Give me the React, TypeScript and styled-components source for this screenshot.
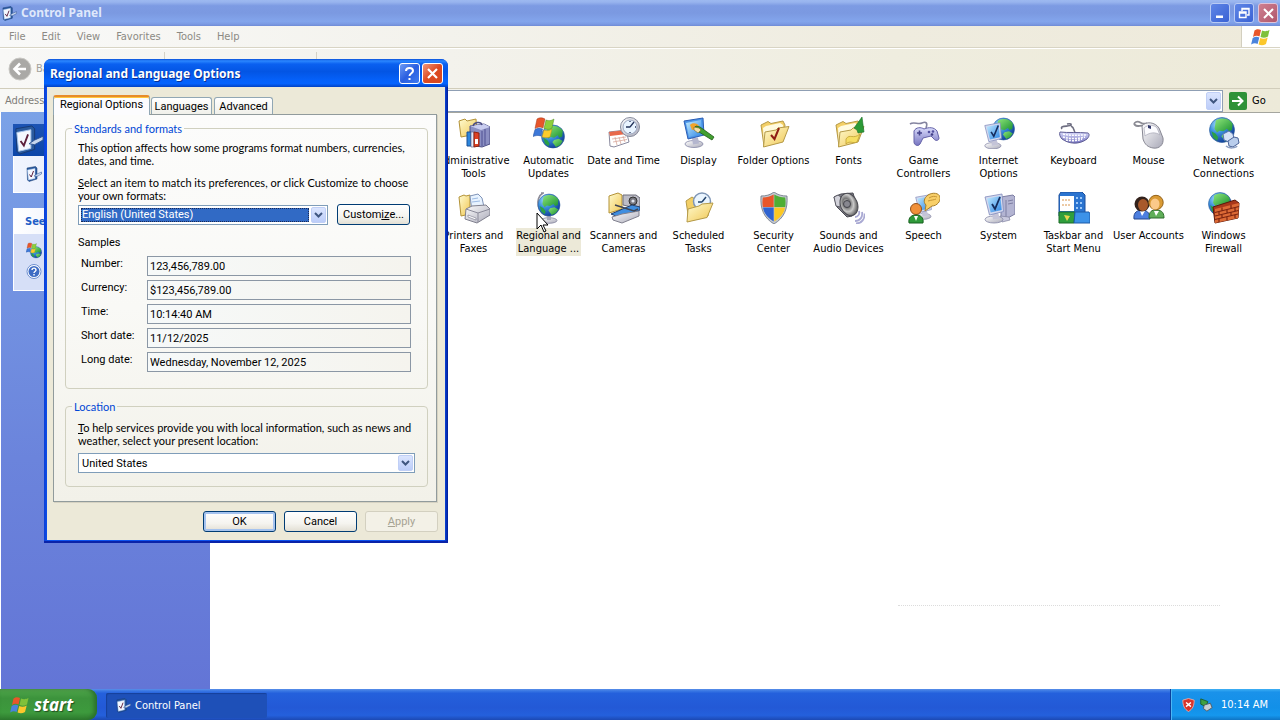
import React from "react";
import styled, { createGlobalStyle, css } from "styled-components";

const tahoma = `"DejaVu Sans Condensed", "Open Sans", sans-serif`;
const sans = `Roboto, "Liberation Sans", Arial, sans-serif`;
const prose = `Lato, "Liberation Sans", Arial, sans-serif`;
const caption = `"Noto Sans", "Open Sans", sans-serif`;

const GlobalStyle = createGlobalStyle`
  *, *::before, *::after { box-sizing: border-box; }
  body { margin: 0; font-family: ${tahoma}; font-size: 11px; line-height: 13px; color: #000; cursor: default; }
  button, select, input { font: inherit; color: inherit; margin: 0; }
  button { padding: 0; border: 0; background: none; }
  svg { display: block; flex: none; }
`;

/* ---------- window shell ---------- */

const Desktop = styled.div`
  position: relative;
  display: flex;
  flex-direction: column;
  min-height: 100vh;
  overflow: hidden;
  background: #fff;
`;

const TitleBar = styled.header`
  display: flex;
  align-items: center;
  gap: 4px;
  height: 26px;
  padding: 0 2px;
  background: linear-gradient(#9db9f0 0, #98b4ee 8%, #7d9be3 22%, #7b99e1 50%, #83a5ec 82%, #7c9be4 92%, #6f8bd6 100%);
`;

const WindowTitle = styled.h1`
  flex: 1;
  margin: 0;
  font: bold 12px/18px ${caption};
  color: #dfe8fb;
`;

const CaptionButton = styled.button<{ $tone: "soft" | "softRed" | "blue" | "red" }>`
  display: flex;
  align-items: center;
  justify-content: center;
  width: 21px;
  height: 21px;
  border: 1px solid #fff;
  border-radius: 3px;
  ${({ $tone }) => $tone === "soft" && css`background: linear-gradient(135deg, #5f86e6, #3a62d4); border-color: #b9cbf4; width: 20px; height: 20px;`}
  ${({ $tone }) => $tone === "softRed" && css`background: linear-gradient(135deg, #cf8090, #b0566c); border-color: #dfc3d8; width: 20px; height: 20px;`}
  ${({ $tone }) => $tone === "blue" && css`background: linear-gradient(135deg, #6d9bf5, #2a5fe0 50%, #3f7bf0);`}
  ${({ $tone }) => $tone === "red" && css`background: linear-gradient(135deg, #f0977c, #dc4a22 50%, #d8491f);`}
`;

const MenuBar = styled.nav`
  display: flex;
  align-items: center;
  height: 22px;
  padding-left: 1px;
  background: linear-gradient(90deg, #f9f9f8, #f3f2ec 35%, #efecdf 70%, #eeeadb);
  border-bottom: 1px solid #d8d4c4;
`;

const MenuItem = styled.button`
  padding: 0 8px;
  line-height: 18px;
  color: #8c8a84;
  &:last-of-type { margin-right: auto; }
`;

const FlagBox = styled.div`
  display: flex;
  align-items: center;
  justify-content: center;
  align-self: stretch;
  width: 39px;
  background: #fff;
  border-left: 1px solid #d3cfbf;
`;

const ToolBar = styled.div`
  display: flex;
  align-items: center;
  height: 41px;
  padding-left: 8px;
  background: linear-gradient(90deg, #f8f8f6, #f3f2ec 35%, #efeddf 70%, #edead9);
  border-top: 1px solid #fff;
  border-bottom: 1px solid #d1cdbb;
`;

const ToolButton = styled.button`
  display: flex;
  align-items: center;
  gap: 4px;
  color: #a3a19b;
`;

const ToolDivider = styled.span<{ $space: number }>`
  width: 1px;
  height: 34px;
  margin-left: ${({ $space }) => $space}px;
  background: #d5d2c6;
`;

const AddressBar = styled.div`
  display: flex;
  align-items: center;
  gap: 3px;
  height: 23px;
  padding: 0 0 0 5px;
  background: linear-gradient(90deg, #f8f8f5, #f1efe6 50%, #edead9);
`;

const AddressLabel = styled.label`
  color: #7f7d78;
`;

const AddressField = styled.div`
  display: flex;
  flex: 1;
  height: 22px;
  padding: 1px;
  background: #fff;
  border: 1px solid #8f9fb4;
`;

const AddressInput = styled.input`
  flex: 1;
  min-width: 0;
  padding: 0 4px;
  border: 0;
  background: none;
  outline: 0;
`;

const DropArrow = styled.button`
  display: flex;
  align-items: center;
  justify-content: center;
  flex: none;
  width: 15px;
  border-radius: 2px;
  background: linear-gradient(#dbe5fe, #bccdf9);
  border: 1px solid #c0cff6;
`;

const GoButton = styled.button`
  display: flex;
  align-items: center;
  gap: 5px;
  width: 54px;
  padding-left: 3px;
`;

const Workspace = styled.div`
  display: flex;
  flex: 1;
  padding-left: 1px;
`;

/* ---------- task side bar ---------- */

const SideBar = styled.aside`
  width: 209px;
  padding: 12px;
  background: linear-gradient(#7ba2e7, #6b84dc 60%, #6375d6);
`;

const TaskGroup = styled.section`
  margin-bottom: 15px;
`;

const TaskTitle = styled.h2<{ $dark?: boolean }>`
  display: flex;
  align-items: center;
  gap: 8px;
  height: ${({ $dark }) => ($dark ? 32 : 26)}px;
  margin: 0;
  padding-left: ${({ $dark }) => ($dark ? 1 : 12)}px;
  font: bold 11px/13px ${tahoma};
  color: #215dc6;
  background: ${({ $dark }) => ($dark ? "linear-gradient(#1d54b4, #0b45a8)" : "linear-gradient(90deg, #fff, #c6d3f7)")};
`;

const TaskList = styled.div<{ $tall?: boolean }>`
  display: flex;
  flex-direction: column;
  gap: 4px;
  padding: ${({ $tall }) => ($tall ? "8px 12px 10px" : "10px 12px")};
  background: linear-gradient(90deg, ${({ $tall }) => ($tall ? "#d6dff7" : "#f0f4fe")}, #d6dff7);
  border: 1px solid #fff;
  border-top: 0;
`;

/* ---------- icon view ---------- */

const IconPane = styled.main`
  position: relative;
  flex: 1;
  padding: 4px 0 0 1px;
  background: #fff;
  border-top: 1px solid #a5a69f;
`;

const IconGrid = styled.div`
  display: grid;
  grid-template-columns: repeat(auto-fill, 75px);
  grid-auto-rows: 75px;
`;

const IconItem = styled.button<{ $column?: number }>`
  display: flex;
  flex-direction: column;
  align-items: center;
  gap: 4px;
  ${({ $column }) => $column && css`grid-column-start: ${$column};`}
`;

const IconLabel = styled.span<{ $active?: boolean }>`
  padding: 1px 0;
  text-align: center;
  white-space: pre;
  background: ${({ $active }) => ($active ? "#ece9d8" : "transparent")};
`;

const BalloonEdge = styled.div`
  position: absolute;
  right: 60px;
  bottom: 83px;
  width: 322px;
  border-top: 1px dotted #dcdcdc;
`;

const Pointer = styled.div`
  position: absolute;
  left: 536px;
  top: 212px;
`;

/* ---------- dialog ---------- */

const Dialog = styled.section`
  position: absolute;
  left: 44px;
  top: 59px;
  width: 404px;
  padding: 0 3px 3px;
  font-family: ${sans};
  background: linear-gradient(90deg, #0a3fd6, #0d52ee 1%, #0d52ee 99%, #001b96);
  border-radius: 7px 7px 0 0;
  box-shadow: inset 0 -2px 0 #0a23a8;
`;

const DialogTitleBar = styled.header`
  display: flex;
  align-items: center;
  gap: 2px;
  height: 28px;
  margin: 0 -3px;
  padding: 1px 5px 0 6px;
  border-radius: 7px 7px 0 0;
  background: linear-gradient(#0a50d8 0, #2b87ff 7%, #0a60f0 18%, #0355e4 45%, #0562fb 78%, #0563fd 88%, #0242c4 100%);
`;

const DialogTitle = styled.h2`
  flex: 1;
  margin: 0;
  padding-top: 1px;
  font: bold 12px/18px ${caption};
  color: #fff;
  text-shadow: 1px 1px 0 #0a3093;
`;

const DialogBody = styled.div`
  padding: 8px 8px 8px 6px;
  background: #ece9d8;
`;

const TabStrip = styled.div`
  display: flex;
  align-items: flex-end;
  gap: 2px;
  height: 19px;
`;

const Tab = styled.button<{ $active?: boolean; $width: number }>`
  width: ${({ $width }) => $width}px;
  height: 17px;
  border: 1px solid #91a7b4;
  border-bottom: 0;
  border-radius: 3px 3px 0 0;
  background: linear-gradient(#fff, #f0f0ea);
  white-space: nowrap;
  ${({ $active }) => $active && css`
    height: 20px;
    margin: 0 -1px -1px 0;
    padding-bottom: 3px;
    border-top: 2px solid #e68b2c;
    background: #fcfcfe;
    box-shadow: inset 0 1px 0 #ffc73c;
    position: relative;
  `}
`;

const TabPanel = styled.div`
  display: flex;
  flex-direction: column;
  gap: 11px;
  padding: 7px 8px 14px 11px;
  background: linear-gradient(#fcfcfb, #f9f9f6 50%, #f2f1e9);
  border: 1px solid #919b9c;
  box-shadow: 1px 1px 0 #d6d2c2;
`;

const Group = styled.fieldset<{ $top: number; $bottom: number }>`
  min-width: 0;
  margin: 0;
  padding: ${({ $top }) => $top}px 12px ${({ $bottom }) => $bottom}px;
  border: 1px solid #d0d0bf;
  border-radius: 4px;
`;

const GroupTitle = styled.legend`
  margin-left: -6px;
  padding: 0 2px;
  font-family: ${prose};
  color: #0046d5;
`;

const Hint = styled.p`
  margin: 0 -10px 9px 0;
  font-family: ${prose};
`;

const PickHint = styled.label<{ $gap: number }>`
  display: block;
  margin: 0 -10px ${({ $gap }) => $gap}px 0;
  font-family: ${prose};
`;

const PickRow = styled.div`
  display: flex;
  align-items: center;
  gap: 9px;
  margin-right: 5px;
`;

const SelectFrame = styled.div`
  display: flex;
  flex: 1;
  height: 20px;
  padding: 1px;
  background: #fff;
  border: 1px solid #7f9db9;
`;

const Select = styled.select<{ $focused?: boolean }>`
  flex: 1;
  min-width: 0;
  margin: 1px;
  margin-right: 2px;
  padding: 0 1px;
  border: 0;
  border-radius: 0;
  appearance: none;
  outline: 0;
  background: #fff;
  ${({ $focused }) => $focused && css`
    color: #fff;
    background: #316ac5;
    outline: 1px dotted #1a2a55;
    outline-offset: -1px;
  `}
`;

const PushButton = styled.button<{ $default?: boolean }>`
  width: 73px;
  height: 21px;
  border: 1px solid #003c74;
  border-radius: 3px;
  background: linear-gradient(#fff, #f5f4ef 60%, #e2dfd4);
  ${({ $default }) => $default && css`box-shadow: inset 0 0 0 2px #a5c3ef;`}
  &:disabled { color: #a6a393; border-color: #d3d0c0; background: #f3f1e7; }
`;

const SampleTitle = styled.p`
  margin: 11px 0 7px;
`;

const Samples = styled.div`
  display: grid;
  grid-template-columns: 66px 1fr;
  row-gap: 4px;
  margin: 0 4px 0 3px;
`;

const SampleLabel = styled.label`
  padding-top: 1px;
`;

const SampleField = styled.input`
  width: 100%;
  height: 20px;
  padding: 0 2px;
  border: 1px solid #8b97a5;
  background: linear-gradient(90deg, #f6f9f9, #f5f4ee);
  outline: 0;
`;

const ButtonRow = styled.footer`
  display: flex;
  justify-content: flex-end;
  gap: 8px;
  margin: 9px -1px 0 0;
`;

/* ---------- task bar ---------- */

const TaskBar = styled.footer`
  display: flex;
  align-items: stretch;
  height: 31px;
  background: linear-gradient(#5a8fe8 0, #3a78e4 6%, #2460dc 14%, #2359d6 60%, #2460dc 85%, #1c49b4 100%);
`;

const StartButton = styled.button`
  display: flex;
  align-items: center;
  gap: 4px;
  width: 97px;
  padding-left: 10px;
  border-radius: 0 9px 9px 0;
  background: linear-gradient(#5eac56 0, #49a046 10%, #3c933c 30%, #3d9a3d 75%, #2f7d2f 100%);
  box-shadow: inset -3px 0 4px #2a6f2c;
  font: italic bold 17px/22px ${caption};
  color: #fff;
  text-shadow: 1px 1px 1px #1f4f1f;
`;

const TaskButton = styled.button`
  display: flex;
  align-items: center;
  gap: 4px;
  width: 161px;
  margin: 4px auto 2px 9px;
  padding-left: 10px;
  color: #fff;
  border-radius: 2px;
  background: #1e50b8;
  box-shadow: inset 1px 1px 1px #16409a;
`;

const Tray = styled.div`
  display: flex;
  align-items: center;
  gap: 4px;
  width: 110px;
  padding-left: 11px;
  color: #fff;
  border-left: 1px solid #0a3f9c;
  box-shadow: inset 1px 0 0 #4db6f4;
  background: linear-gradient(#3fb0f4 0, #1a92ea 10%, #1290e8 60%, #1597ee 85%, #0f74c4 100%);
`;

const Clock = styled.time`
  margin-left: 4px;
  white-space: nowrap;
`;

/* ---------- drawings ---------- */

const PaintSheet = styled.svg`
  position: absolute;
`;

const Paints = () => (
  <PaintSheet width="0" height="0" aria-hidden="true">
    <defs>
      <radialGradient id="sea" cx=".32" cy=".28" r=".75">
        <stop offset="0" stopColor="#a6dcfc" /><stop offset=".45" stopColor="#3a8fdc" /><stop offset="1" stopColor="#123f9a" />
      </radialGradient>
      <linearGradient id="land" x1="0" y1="0" x2="1" y2="1">
        <stop offset="0" stopColor="#8fe67a" /><stop offset="1" stopColor="#178f30" />
      </linearGradient>
      <linearGradient id="folder" x1="0" y1="0" x2="1" y2="1">
        <stop offset="0" stopColor="#fffbd0" /><stop offset="1" stopColor="#f0c652" />
      </linearGradient>
      <linearGradient id="steel" x1="0" y1="0" x2="1" y2="1">
        <stop offset="0" stopColor="#fff" /><stop offset="1" stopColor="#a9a9b8" />
      </linearGradient>
      <linearGradient id="screen" x1="0" y1="0" x2="1" y2="1">
        <stop offset="0" stopColor="#c3ecff" /><stop offset="1" stopColor="#2f86e4" />
      </linearGradient>
      <linearGradient id="lilac" x1="0" y1="0" x2="0" y2="1">
        <stop offset="0" stopColor="#d9dbfb" /><stop offset="1" stopColor="#7674c0" />
      </linearGradient>
      <radialGradient id="cone" cx=".4" cy=".4" r=".6">
        <stop offset="0" stopColor="#eee" /><stop offset=".35" stopColor="#777" /><stop offset=".65" stopColor="#c9c9c9" /><stop offset="1" stopColor="#666" />
      </radialGradient>
    </defs>
  </PaintSheet>
);

const Globe = ({ x, y, r }: { x: number; y: number; r: number }) => (
  <g transform={`translate(${x} ${y}) scale(${r / 10})`}>
    <circle r="10" fill="url(#sea)" stroke="#2a5a9a" strokeWidth=".5" />
    <path d="M-5-7.600C0-10.500 6-9 8.500-5L8 0 5.500 1 4-1 1 1-2 .5-4 2-6-1-5.500-4Z" fill="url(#land)" />
    <path d="M1 3 5 2 8.500 4 6 7.500 2.500 9.200 1 7-.5 5Z" fill="url(#land)" />
    <path d="M-8.500 1-5 3-3 6-4 8.500-7 6Z" fill="#2ba045" />
  </g>
);

const Folder = () => (
  <g>
    <path d="M3 8 10 4.500l3 2L25 4l2 4-2 16L6 29Z" fill="#f3cf66" stroke="#b59a48" />
    <path d="M5 11 8 9l14-3 3 2-1 14L6 27Z" fill="#fffbe0" />
    <path d="M7 15 18 13l2-2 11-1.500-6 15.500L5.500 30Z" fill="url(#folder)" stroke="#b59a48" />
  </g>
);

const Monitor = ({ tick }: { tick?: boolean }) => (
  <g>
    <ellipse cx="11" cy="27.500" rx="9" ry="3.500" fill="url(#steel)" stroke="#8486a6" strokeWidth=".8" />
    <path d="m9 21 6-.5 2 6-7 1Z" fill="#c4c4d8" />
    <path d="m2 5 17-3 1.500 17.500-14 3.500Z" fill="#d5d9ee" stroke="#7f8abb" strokeWidth=".8" />
    <path d="m4 6.500 13.500-2.500 1.200 14-11 2.500Z" fill="url(#screen)" />
    {tick && <path d="m9 12 3 5L17 5" fill="none" stroke="#152c5c" strokeWidth="1.800" />}
  </g>
);

const Flag = ({ size }: { size: number }) => (
  <svg width={size} height={size} viewBox="0 0 20 20" aria-hidden="true">
    <path d="M3.500 3.500C6 1.500 8 2 10 3L8.500 9.500C6.500 8.500 4.500 8.500 2 10Z" fill="#e8562a" />
    <path d="M11 3.500c2.500 1 4.500 1 7.500-.5L17 9.500c-2.500 1.500-5 1.500-7.500.5Z" fill="#7fc13a" />
    <path d="M1.700 11c2.500-1.500 4.500-1.500 6.600-.5L6.600 17c-2-1-4-1-6.500.5Z" fill="#4a83dc" />
    <path d="M9.200 11c2.500 1 4.800 1 7.500-.5L15 17c-2.500 1.500-5 1.500-7.400.5Z" fill="#fbc72c" />
  </svg>
);

const PanelIcon = ({ size }: { size: number }) => (
  <svg width={size} height={size} viewBox="0 0 32 32" aria-hidden="true">
    <path d="m2 4 17-3 3 3v22L6 31l-3-3Z" fill="#2a5a9e" stroke="#173a72" />
    <path d="m3 8 15-3v20L5 28Z" fill="#f4f8ff" stroke="#a9c6ee" />
    <path d="m7 17 3.500 5L15 10" fill="none" stroke="#5c1f3c" strokeWidth="2" />
    <path d="m16 20 6-4 9-4v4l-9 5Z" fill="#c6d6ee" stroke="#2c5292" />
  </svg>
);

const Chevron = () => (
  <svg width="9" height="6" viewBox="0 0 9 6" aria-hidden="true">
    <path d="m1 1 3.500 3.500L8 1" fill="none" stroke="#3f5680" strokeWidth="2" />
  </svg>
);

const art: Record<string, React.ReactNode> = {
  admin: (
    <g>
      <path d="m1 4 6-2 2 2 9-2 1 15-16 3Z" fill="url(#folder)" stroke="#b39236" />
      <path d="m12 9 14-2 6 3v17l-8 3-12-2Z" fill="#8b8fc2" stroke="#4d4f86" />
      <path d="m12 9 14-2 6 3-9 3Z" fill="#c9cdf0" />
      <path d="M24 14v15M27 12v16" stroke="#6366a2" strokeWidth="1.500" />
      <path d="M9 15h4v14H9Z" fill="#2c86dc" stroke="#184f95" />
      <path d="M13 15h3v15h-3Z" fill="#e4e8f4" stroke="#666a94" strokeWidth=".7" />
      <path d="m16 15 5 1v13l-5 1Z" fill="#dd4124" stroke="#8f2412" />
      <path d="M17 22h3v5h-3Z" fill="#fff" />
      <path d="M15 9c1-4 8-5 9-1" fill="none" stroke="#4d4f86" strokeWidth="1.500" />
    </g>
  ),
  update: (
    <g>
      <Globe x={20} y={19.500} r={11.500} />
      <path d="M4 2c3-2 6-1 8 0l-2 9c-3-1.500-5-1-8 .5Z" fill="#e8562a" stroke="#a2391a" strokeWidth=".5" />
      <path d="M13 3c3 1 5 1 8-1l-2 9c-3 2-5 1.500-8 .5Z" fill="#8ccf3c" stroke="#4c8a1d" strokeWidth=".5" />
      <path d="M2 12.500c3-1.500 5-1.500 7.500-.5L8 19c-3-1-5-.5-8 .5Z" fill="#3d78d8" stroke="#214c9a" strokeWidth=".5" />
      <path d="M11 13c3 1 5 1 8-1l-2 8c-3 1-5 1-8 0Z" fill="#fdcc2d" stroke="#b88d12" strokeWidth=".5" />
    </g>
  ),
  date: (
    <g>
      <path d="m1 15 17-2 3 12-15 5-4-1Z" fill="#fff" stroke="#8a8a9e" />
      <path d="m1 15 17-2 1 4-17 2Z" fill="#e8684a" />
      <path d="m4 22 14-2M5 25l14-2.500M7 20l2 8M11 20l2 7M15 19l2 6" stroke="#d8a79a" strokeWidth=".8" />
      <circle cx="22" cy="10" r="9.500" fill="url(#steel)" stroke="#858a9c" />
      <circle cx="22" cy="10" r="7" fill="#e9f4ff" stroke="#8b98b4" strokeWidth=".8" />
      <path d="m22 10 4-5M22 10h-4M22 4v1M22 15v1M28 10h-1" fill="none" stroke="#24335a" strokeWidth="1.300" />
    </g>
  ),
  display: (
    <g>
      <ellipse cx="11" cy="27" rx="9" ry="3.500" fill="url(#steel)" stroke="#8486a6" strokeWidth=".8" />
      <path d="m9 21 6-.5 1 6-6 1Z" fill="#b4b6ce" />
      <path d="m1 4 19-3 1 17-16 4Z" fill="#4b95e8" stroke="#2a5cb4" />
      <path d="m3 6 15-3 1 14-13 3Z" fill="url(#screen)" />
      <path d="M7 8c2-3 8-2 9 1l-2 3-5 1Z" fill="#f0a32a" />
      <path d="m13 9 4 1 14 10-2 3-13-8-5-4Z" fill="#42a030" stroke="#1f5c16" strokeWidth=".8" />
      <path d="m11 10 5 1 2 2-3 3-4-3Z" fill="#f4e0a8" stroke="#7a6520" strokeWidth=".6" />
    </g>
  ),
  folder: (
    <g>
      <Folder />
      <path d="m13 18 3.500 4L21 11" fill="none" stroke="#8f1d14" strokeWidth="2" />
    </g>
  ),
  fonts: (
    <g>
      <Folder />
      <path d="M21 11 29 0l2 15-6 1-1-3Z" fill="#2b9a36" stroke="#1b6f28" strokeWidth=".6" />
      <path d="M13 22c4-6 7 1 14-5l-3 8c-4 2-7-2-11 2Z" fill="#f6de63" stroke="#b99a2d" strokeWidth=".7" />
    </g>
  ),
  game: (
    <g>
      <path d="M2 7c4-3 8 1 12-1s6 0 4 5" fill="none" stroke="#8484a0" strokeWidth="1.600" />
      <path d="M6 14c2-4 7-4 10-2 5-2 10-2 13 2l2 7c0 3-4 3-5 1l-3-3-8 2-3 6c-2 3-6 1-6-2Z" fill="url(#lilac)" stroke="#6462a8" />
      <path d="M9 16h5M11.500 13.500v5" stroke="#45438c" strokeWidth="1.600" />
      <circle cx="21" cy="15" r="1.300" fill="#5351a0" /><circle cx="25" cy="14.500" r="1.300" fill="#5351a0" /><circle cx="24" cy="17.500" r="1.300" fill="#3f3d84" />
    </g>
  ),
  internet: (
    <g>
      <Globe x={20.500} y={12} r={11} />
      <g transform="translate(0 4) scale(.9)"><Monitor tick /></g>
    </g>
  ),
  keyboard: (
    <g>
      <path d="M4 12c-3-4 8-2 9-4s-4-1-4-1M13 9c4 2 2 4 4 6" fill="none" stroke="#6d6d80" strokeWidth="1.600" />
      <path d="M2 15c8 1 18 0 28 1 2 1 1 4-1 6-8 6-18 5-25 0-2-2-3-5-2-7Z" fill="url(#lilac)" stroke="#5e5c94" />
      <path d="M5 17c8 2 15 1 23 1M5 20c7 2 15 2 22 0M8 23c5 1 11 1 16-1" fill="none" stroke="#fff" strokeWidth="1.500" strokeDasharray="2 1" />
    </g>
  ),
  mouse: (
    <g>
      <path d="M14 6C9 9 7 3 3 5s0 4 2 4 6-2 8 2" fill="none" stroke="#8b8b94" strokeWidth="1.800" />
      <path d="M9 9c4-5 13-4 17 2l4 10c1 7-4 11-10 10-5-1-8-3-10-9Z" fill="url(#steel)" stroke="#888894" />
      <path d="M11 11c4-4 11-3 13 0l3 7c-4-3-10-3-15 1Z" fill="#fcfcff" stroke="#a9a9b8" strokeWidth=".7" />
      <path d="m15 8 3 1v3l-3-1Z" fill="#33396c" />
    </g>
  ),
  network: (
    <g>
      <Globe x={14} y={13} r={12.500} />
      <path d="m15 17 6-3 4 3 1 5-5 3-5-2Z" fill="#d5e2f6" stroke="#5673ac" />
      <path d="m20 24 6-4 4 1 1 5-6 4-4-1Z" fill="#b9cdec" stroke="#4a6398" />
      <path d="M18 29c3 3 10 2 11 0" fill="none" stroke="#8b9ec2" strokeWidth="1.500" />
    </g>
  ),
  printer: (
    <g>
      <path d="m1 5 5-2 2 1 4-1v19l-9 2Z" fill="url(#folder)" stroke="#b39236" />
      <path d="m12 4 8-2 4 4 2 9-12 4Z" fill="#e8f3ff" stroke="#7f93b8" />
      <path d="m14 7 6-1M14 10l8-1" stroke="#9dbbe4" />
      <path d="m8 17 6-3 14-1 4 4v6l-13 8-12-4Z" fill="url(#steel)" stroke="#80808e" />
      <path d="m8 17 12 4 12-4M20 21v9" fill="none" stroke="#8b8b9a" />
      <path d="m10 23 8 3v2l-8-3Z" fill="#fff" stroke="#77778a" strokeWidth=".6" />
    </g>
  ),
  regional: (
    <g>
      <path d="M8 1h3M10 1C1 6 4 24 17 24" fill="none" stroke="#8b8b98" strokeWidth="1.600" />
      <ellipse cx="16" cy="28.500" rx="8" ry="2.800" fill="url(#steel)" stroke="#80809a" strokeWidth=".8" />
      <path d="M14 24h4v4h-4Z" fill="#a9a9ba" />
      <Globe x={16} y={13} r={11} />
    </g>
  ),
  scanner: (
    <g>
      <path d="m1 4 9-3 4 2v14L1 21Z" fill="url(#folder)" stroke="#b39236" />
      <path d="M15 3h13l4 3v8l-4 2-13-3Z" fill="#bcbcc6" stroke="#6e6e7a" />
      <circle cx="25" cy="9" r="4" fill="#77777f" stroke="#333" /><circle cx="25" cy="9" r="1.600" fill="#dfe4ee" />
      <path d="M3 22 24 13l8 2v3L13 26Z" fill="#3f8ee0" stroke="#23406e" />
      <path d="m4 25 10-3 17-3v5L14 31l-9-3Z" fill="url(#steel)" stroke="#80808e" />
      <path d="m7 13 19 6 4-2" fill="none" stroke="#404654" strokeWidth="1.500" />
    </g>
  ),
  scheduled: (
    <g>
      <path d="M3 9 9 5l3 2 13-2 2 4-2 15L6 29Z" fill="#f3cf66" stroke="#b59a48" />
      <circle cx="19" cy="9.500" r="8.500" fill="#eaf5ff" stroke="#7f96b6" strokeWidth="1.500" />
      <path d="m19 10 4-5M19 10h-4" stroke="#24456e" strokeWidth="1.500" />
      <path d="M5 17 16 14l3-2 11-1-6 14.500L4 30Z" fill="url(#folder)" stroke="#b59a48" />
    </g>
  ),
  security: (
    <g>
      <path d="M16 0c4 3 8 4 13 4 1 13-3 22-13 28C6 26 2 17 3 4c5 0 9-1 13-4Z" fill="#c3c8d0" stroke="#6b7280" strokeWidth=".8" />
      <path d="M15.700 2.500V15H4.800C4.300 12 4.300 9 4.800 5.500c4 0 7.500-1 10.900-3Z" fill="#e8562a" />
      <path d="M16.300 2.500V15h11c.4-3 .4-6-.1-9.500-4 0-7.500-1-10.900-3Z" fill="#4fae34" />
      <path d="M15.700 15.600v14C9.500 26 6 21.500 5 15.600Z" fill="#2f63d0" />
      <path d="M16.300 15.600v14C22.500 26 26 21.500 27 15.600Z" fill="#fcc823" />
    </g>
  ),
  sound: (
    <g>
      <path d="M22 29c5 0 8-4 7-9M22 25c3 0 5-3 4-6M23 31.500c6 0 9-5 8.500-10" fill="none" stroke="#a9a9d3" strokeWidth="1.800" />
      <path d="M1 5 8 2l12-1 4 14-5 9-5 1L4 15Z" fill="#808089" stroke="#4a4a52" />
      <path d="m1 5 4-2 3 2-1 10-4-1Z" fill="#d2d2da" stroke="#5b5b65" />
      <ellipse cx="16" cy="12.500" rx="8.500" ry="11.500" transform="rotate(-22 16 12.500)" fill="url(#cone)" stroke="#4b4b52" />
      <circle cx="14" cy="12" r="3.500" fill="#87878f" stroke="#43434a" />
    </g>
  ),
  speech: (
    <g>
      <g transform="translate(6 1) scale(.85)"><Monitor /></g>
      <path d="M20 3c5-3 11-2 12 2s-3 9-8 9l-7 5 1-6c-3-3-2-7 2-10Z" fill="#f8cf68" stroke="#a9802a" />
      <path d="M21 6c3-2 6-2 8-1M20 9c3-1 6-1 8-2" fill="none" stroke="#c69535" />
      <circle cx="8" cy="17" r="5.500" fill="#f0903a" stroke="#94501a" />
      <path d="M1 31c-1-6 3-8 7-8s8 2 7 8Z" fill="#2f9a3a" stroke="#17601f" />
      <path d="m6 24 2 5 2-5Z" fill="#fff" />
    </g>
  ),
  system: (
    <g>
      <path d="m18 5 12-2 2 2v17l-9 5-5-2Z" fill="#b3b4d2" stroke="#7d7ea2" />
      <path d="M23 8v17M25 9l5-1M25 12l5-1" stroke="#7d7ea2" />
      <path d="m17 24 9 1 1 3-8 2Z" fill="#c9c9de" stroke="#7e7f9e" strokeWidth=".7" />
      <Monitor tick />
    </g>
  ),
  taskbar: (
    <g>
      <path d="M3 0h21l3 3v21H1V3Z" fill="#2b74d0" stroke="#1c4f9c" />
      <path d="M2 4h14v15H2Z" fill="#fff" />
      <path d="M4 8h9M4 13h9" stroke="#d9944b" strokeDasharray="2 1" />
      <path d="M18 5h2v2h-2zM22 5h2v2h-2zM18 10h2v2h-2zM22 10h2v2h-2zM18 15h2v2h-2zM22 15h2v2h-2z" fill="#9cc8f8" />
      <path d="M1 20h16l-1 11H1Z" fill="#2f9e3c" stroke="#1b6a26" />
      <path d="M17 20h14l1 2v9H16Z" fill="#3c92e8" stroke="#1c5aa8" />
      <path d="m6 23 6 1-3 5Z" fill="#e7d64e" />
    </g>
  ),
  users: (
    <g>
      <path d="M1 27c-1-7 4-9 8-9s8 2 8 9Z" fill="#4d7fe0" stroke="#27498f" />
      <path d="M16 26c0-7 3-8 7-8s8 1 8 8Z" fill="#5fae58" stroke="#2f6d2c" />
      <path d="m7 19 2 5 3-5ZM21 19l2 5 3-5Z" fill="#fff" />
      <circle cx="9" cy="12" r="7.500" fill="#33221c" /><ellipse cx="10" cy="13" rx="5" ry="6" fill="#a8592b" />
      <circle cx="23" cy="10.500" r="7.200" fill="#d99a34" stroke="#94621a" /><ellipse cx="22" cy="12" rx="4.500" ry="5.500" fill="#fbc98a" />
    </g>
  ),
  firewall: (
    <g>
      <Globe x={12} y={12} r={11.500} />
      <path d="m5 15 22-7 4 3-1 15-23 5Z" fill="#a8371a" stroke="#5c1809" />
      <path d="m7 17 24-6-1 15L7 31Z" fill="#dc6a36" />
      <path d="m7 20.500 24-6M7 24l23.500-5.500M7 27.500 30 22M14 15.500v3.500M23 13v3.500M11 20v3.500M19 18v3.500M27 16v3.500M14 23v3.500M23 20.500V24M11 27v3M19 25v3M27 23v3" stroke="#7c2410" strokeWidth="1.200" />
    </g>
  ),
};

const items: { icon: string; label: string; column?: number; active?: boolean }[] = [
  { icon: "admin", label: "Administrative\nTools", column: 4 },
  { icon: "update", label: "Automatic\nUpdates" },
  { icon: "date", label: "Date and Time" },
  { icon: "display", label: "Display" },
  { icon: "folder", label: "Folder Options" },
  { icon: "fonts", label: "Fonts" },
  { icon: "game", label: "Game\nControllers" },
  { icon: "internet", label: "Internet\nOptions" },
  { icon: "keyboard", label: "Keyboard" },
  { icon: "mouse", label: "Mouse" },
  { icon: "network", label: "Network\nConnections" },
  { icon: "printer", label: "Printers and\nFaxes", column: 4 },
  { icon: "regional", label: "Regional and\nLanguage ...", active: true },
  { icon: "scanner", label: "Scanners and\nCameras" },
  { icon: "scheduled", label: "Scheduled\nTasks" },
  { icon: "security", label: "Security\nCenter" },
  { icon: "sound", label: "Sounds and\nAudio Devices" },
  { icon: "speech", label: "Speech" },
  { icon: "system", label: "System" },
  { icon: "taskbar", label: "Taskbar and\nStart Menu" },
  { icon: "users", label: "User Accounts" },
  { icon: "firewall", label: "Windows\nFirewall" },
];

const samples = [
  ["Number:", "123,456,789.00"],
  ["Currency:", "$123,456,789.00"],
  ["Time:", "10:14:40 AM"],
  ["Short date:", "11/12/2025"],
  ["Long date:", "Wednesday, November 12, 2025"],
];

const RegionalDialog = () => (
  <Dialog role="dialog" aria-labelledby="dialog-title">
    <DialogTitleBar>
      <DialogTitle id="dialog-title">Regional and Language Options</DialogTitle>
      <CaptionButton $tone="blue" aria-label="Help">
        <svg width="13" height="15" viewBox="0 0 13 15" aria-hidden="true">
          <path d="M3 5C3 1 10 1 10 5c0 2-3.500 2.500-3.500 5M6.500 12v2" fill="none" stroke="#fff" strokeWidth="2" />
        </svg>
      </CaptionButton>
      <CaptionButton $tone="red" aria-label="Close">
        <svg width="13" height="13" viewBox="0 0 13 13" aria-hidden="true">
          <path d="m2 2 9 9M11 2l-9 9" stroke="#fff" strokeWidth="2.200" />
        </svg>
      </CaptionButton>
    </DialogTitleBar>
    <DialogBody>
      <TabStrip role="tablist">
        <Tab role="tab" aria-selected="true" $active $width={97}>Regional Options</Tab>
        <Tab role="tab" aria-selected="false" $width={61}>Languages</Tab>
        <Tab role="tab" aria-selected="false" $width={59}>Advanced</Tab>
      </TabStrip>
      <TabPanel role="tabpanel">
        <Group $top={6} $bottom={16}>
          <GroupTitle>Standards and formats</GroupTitle>
          <Hint>This option affects how some programs format numbers, currencies,<br />dates, and time.</Hint>
          <PickHint htmlFor="format" $gap={2}>
            <u>S</u>elect an item to match its preferences, or click Customize to choose<br />your own formats:
          </PickHint>
          <PickRow>
            <SelectFrame>
              <Select id="format" $focused defaultValue="en"><option value="en">English (United States)</option></Select>
              <DropArrow tabIndex={-1} aria-label="Show formats"><Chevron /></DropArrow>
            </SelectFrame>
            <PushButton>Custom<u>iz</u>e...</PushButton>
          </PickRow>
          <SampleTitle>Samples</SampleTitle>
          <Samples>
            {samples.map(([name, value]) => (
              <React.Fragment key={name}>
                <SampleLabel htmlFor={name}>{name}</SampleLabel>
                <SampleField id={name} readOnly value={value} />
              </React.Fragment>
            ))}
          </Samples>
        </Group>
        <Group $top={8} $bottom={13}>
          <GroupTitle>Location</GroupTitle>
          <PickHint htmlFor="place" $gap={6}>
            <u>T</u>o help services provide you with local information, such as news and<br />weather, select your present location:
          </PickHint>
          <SelectFrame>
            <Select id="place" defaultValue="us"><option value="us">United States</option></Select>
            <DropArrow tabIndex={-1} aria-label="Show locations"><Chevron /></DropArrow>
          </SelectFrame>
        </Group>
      </TabPanel>
      <ButtonRow>
        <PushButton $default>OK</PushButton>
        <PushButton>Cancel</PushButton>
        <PushButton disabled><u>A</u>pply</PushButton>
      </ButtonRow>
    </DialogBody>
  </Dialog>
);

export default function App() {
  return (
    <Desktop>
      <GlobalStyle />
      <Paints />
      <TitleBar>
        <PanelIcon size={15} />
        <WindowTitle>Control Panel</WindowTitle>
        <CaptionButton $tone="soft" aria-label="Minimize">
          <svg width="12" height="12" viewBox="0 0 12 12" aria-hidden="true"><path d="M2 8.500h7v2.500H2Z" fill="#fff" /></svg>
        </CaptionButton>
        <CaptionButton $tone="soft" aria-label="Restore">
          <svg width="12" height="12" viewBox="0 0 12 12" aria-hidden="true">
            <path d="M4 4V1.500h7V8H9M1.500 5H8v5.500H1.500ZM1.500 6H8M4 2h7" fill="none" stroke="#fff" strokeWidth="1.400" />
          </svg>
        </CaptionButton>
        <CaptionButton $tone="softRed" aria-label="Close window">
          <svg width="13" height="13" viewBox="0 0 13 13" aria-hidden="true"><path d="m2 2 9 9M11 2l-9 9" stroke="#fff" strokeWidth="2" /></svg>
        </CaptionButton>
      </TitleBar>
      <MenuBar>
        {["File", "Edit", "View", "Favorites", "Tools", "Help"].map((name) => <MenuItem key={name}>{name}</MenuItem>)}
        <FlagBox><Flag size={20} /></FlagBox>
      </MenuBar>
      <ToolBar>
        <ToolButton>
          <svg width="24" height="24" viewBox="0 0 24 24" aria-hidden="true">
            <circle cx="12" cy="12" r="11" fill="#aaa9a6" stroke="#c9c8c4" />
            <path d="M18 12H7m5-5.500L6.500 12l5.500 5.500" fill="none" stroke="#fff" strokeWidth="2.600" />
          </svg>
          Back
        </ToolButton>
        <ToolDivider $space={104} />
        <ToolDivider $space={151} />
      </ToolBar>
      <AddressBar>
        <AddressLabel htmlFor="address">Address</AddressLabel>
        <AddressField>
          <AddressInput id="address" />
          <DropArrow aria-label="Show addresses"><Chevron /></DropArrow>
        </AddressField>
        <GoButton>
          <svg width="18" height="18" viewBox="0 0 18 18" aria-hidden="true">
            <rect width="18" height="18" rx="2" fill="#2f9238" />
            <path d="M3 9h10M9 4.500 13.500 9 9 13.500" fill="none" stroke="#fff" strokeWidth="2" />
          </svg>
          Go
        </GoButton>
      </AddressBar>
      <Workspace>
        <SideBar>
          <TaskGroup>
            <TaskTitle $dark><PanelIcon size={30} /></TaskTitle>
            <TaskList><PanelIcon size={16} /></TaskList>
          </TaskGroup>
          <TaskGroup>
            <TaskTitle>See Also</TaskTitle>
            <TaskList $tall>
              <svg width="16" height="17" viewBox="0 0 32 32" aria-hidden="true">{art.update}</svg>
              <svg width="16" height="17" viewBox="0 0 16 16" aria-hidden="true">
                <circle cx="8" cy="8" r="7" fill="#fff" stroke="#6d8fd0" />
                <circle cx="8" cy="8" r="5.500" fill="#3e6cc4" />
                <path d="M6 6.500c0-2.500 4-2.500 4 0C10 8 8 8 8 9.500M8 10.500V12" fill="none" stroke="#fff" strokeWidth="1.400" />
              </svg>
            </TaskList>
          </TaskGroup>
        </SideBar>
        <IconPane>
          <IconGrid>
            {items.map(({ icon, label, column, active }) => (
              <IconItem key={icon} $column={column}>
                <svg width="32" height="32" viewBox="0 0 32 32" aria-hidden="true">{art[icon]}</svg>
                <IconLabel $active={active}>{label}</IconLabel>
              </IconItem>
            ))}
          </IconGrid>
          <BalloonEdge />
        </IconPane>
      </Workspace>
      <TaskBar>
        <StartButton><Flag size={20} />start</StartButton>
        <TaskButton><PanelIcon size={15} />Control Panel</TaskButton>
        <Tray>
          <svg width="13" height="14" viewBox="0 0 16 16" aria-hidden="true">
            <path d="m8 0 7 2c0 7-2 11-7 14C3 13 1 9 1 2Z" fill="#d8342c" stroke="#f4b0a8" />
            <path d="m5 5 6 5M11 5l-6 5" stroke="#fff" strokeWidth="1.800" />
          </svg>
          <svg width="14" height="14" viewBox="0 0 16 16" aria-hidden="true">
            <path d="m2 1 8 3-2 6-6-3Z" fill="#3fa042" stroke="#1b5c25" />
            <path d="m6 8 7-2 2 5-6 4-4-3Z" fill="#c9cfd4" stroke="#4c565e" />
          </svg>
          <Clock>10:14 AM</Clock>
        </Tray>
      </TaskBar>
      <RegionalDialog />
      <Pointer>
        <svg width="13" height="21" viewBox="0 0 13 21" aria-hidden="true">
          <path d="M1 1v16l4-4 3 7 2-1-3-6h5Z" fill="#fff" stroke="#000" />
        </svg>
      </Pointer>
    </Desktop>
  );
}
